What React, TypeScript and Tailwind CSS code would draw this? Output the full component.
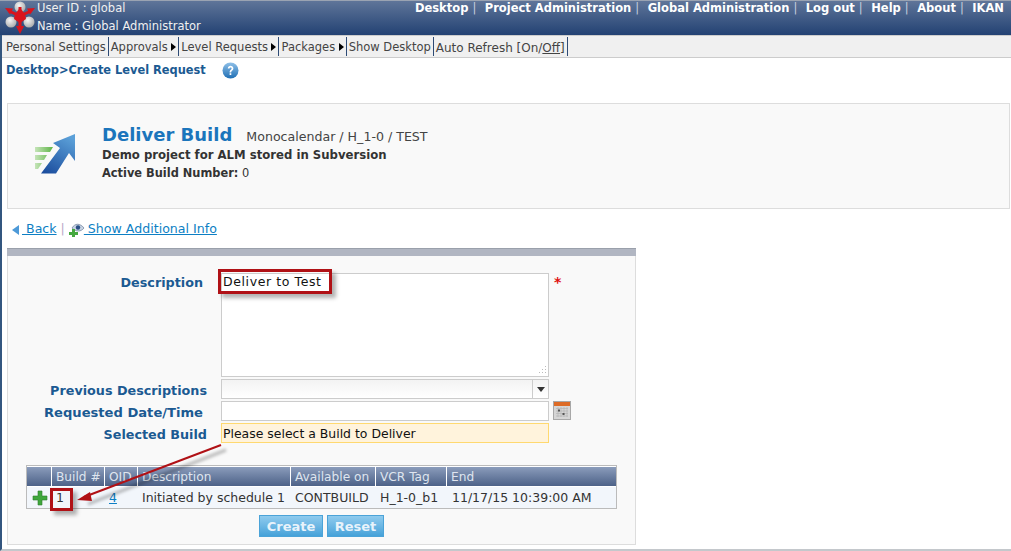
const font = { fontFamily: '"DejaVu Sans", Verdana, sans-serif' };

const topLinks = ['Desktop', 'Project Administration', 'Global Administration', 'Log out', 'Help', 'About'];

const columns = [
  { label: '', width: 'w-[25px]' },
  { label: 'Build #', width: 'w-[53px]' },
  { label: 'OID', width: 'w-[33px]' },
  { label: 'Description', width: 'w-[153px]' },
  { label: 'Available on', width: 'w-[85px]' },
  { label: 'VCR Tag', width: 'w-[71px]' },
  { label: 'End', width: 'flex-1' },
];

const LogoIcon = () => (
  <svg width="32" height="33" viewBox="0 0 32 33" className="shrink-0">
    <defs>
      <radialGradient id="ball" cx="0.4" cy="0.35" r="0.7">
        <stop offset="0" stopColor="#f4f4f4" />
        <stop offset="1" stopColor="#a8a8a8" />
      </radialGradient>
    </defs>
    <circle cx="15" cy="6" r="5.5" fill="url(#ball)" />
    <circle cx="6" cy="21" r="5.5" fill="url(#ball)" />
    <circle cx="24" cy="21" r="5.5" fill="url(#ball)" />
    <path d="M15 15L4 10M15 15L26 10M15 15V29M15 15V6" stroke="#d9141c" strokeWidth="3" />
    <path d="M0 7l8 .5-3 6zM30 7l-8 .5 3 6zM15 33l-4-8h8z" fill="#d9141c" />
    <path d="M15 7l5 6 1 5-6 4-6-4 1-5z" fill="#d9141c" />
  </svg>
);

const HelpIcon = () => (
  <svg width="17" height="17" viewBox="0 0 17 17" className="shrink-0">
    <defs>
      <linearGradient id="helpBlue" x1="0" y1="0" x2="0" y2="1">
        <stop offset="0" stopColor="#8fc0e8" />
        <stop offset="1" stopColor="#1f6fb5" />
      </linearGradient>
    </defs>
    <circle cx="8.5" cy="8.5" r="8" fill="url(#helpBlue)" />
    <path d="M5.8 6.4c0-3.4 5.6-3.4 5.6 0 0 2.2-2.2 2-2.2 4H7.6c0-2.8 2-2.6 2-4 0-1.2-2-1.2-2 .2z" fill="#fff" />
    <rect x="7.6" y="11.2" width="1.7" height="1.8" fill="#fff" />
  </svg>
);

const DeliverIcon = () => (
  <svg width="41" height="41" viewBox="0 0 41 41">
    <defs>
      <linearGradient id="arrowBlue" x1="0.7" y1="0" x2="0.2" y2="1">
        <stop offset="0" stopColor="#5ba0d8" />
        <stop offset="1" stopColor="#1d4f9f" />
      </linearGradient>
      <linearGradient id="barGreen" x1="1" y1="0" x2="0" y2="0">
        <stop offset="0" stopColor="#5fb548" />
        <stop offset="1" stopColor="#c5e4b8" />
      </linearGradient>
    </defs>
    <path d="M0 14h18l-3 5H0zM0 22h12l-3 5H0zM0 30h7l-4 6H0z" fill="url(#barGreen)" />
    <path d="M6 40.5L25 15l-7-5L40 1v27l-6-8-13 20.5z" fill="url(#arrowBlue)" />
  </svg>
);

const PlusIcon = ({ size }: { size: number }) => (
  <svg width={size} height={size} viewBox="0 0 16 16" className="shrink-0">
    <path d="M6 1h4v5h5v4h-5v5H6v-5H1V6h5z" fill="#3fa73c" stroke="#2c7d2b" strokeWidth="0.6" />
  </svg>
);

const InfoIcon = () => (
  <svg width="16" height="15" viewBox="0 0 16 15" className="shrink-0">
    <path d="M3 6c3-5 8-5 12 0-3 4-8 4-12 0z" fill="#c7d3e3" stroke="#6a7c98" strokeWidth="0.7" />
    <circle cx="9" cy="5.5" r="2.2" fill="#2a4f85" />
    <path d="M3 7h3v3h3v3H6v2H3v-2H0v-3h3z" fill="#45a83f" />
  </svg>
);

const CalendarIcon = () => (
  <svg width="18" height="19" viewBox="0 0 18 19" className="shrink-0">
    <rect x="0.5" y="0.5" width="17" height="18" fill="#d6d6d6" stroke="#a8a8a8" />
    <rect x="1" y="1" width="16" height="4" fill="#dd6b26" />
    <path d="M3 7.5h12M3 10h12M3 12.5h12M3 15h12M5 6v10M8 6v10M11 6v10M14 6v10" stroke="#b4b4b4" strokeWidth="0.7" />
    <rect x="5" y="8.5" width="2" height="2" fill="#555" />
    <rect x="9.5" y="12" width="2" height="2" fill="#555" />
  </svg>
);

const ResizeGrip = () => (
  <svg width="9" height="9" viewBox="0 0 9 9">
    <path d="M7 0h1v1H7zM7 3h1v1H7zM7 6h1v1H7zM4 3h1v1H4zM4 6h1v1H4zM1 6h1v1H1z" fill="#bbb" />
  </svg>
);

const MenuItem = ({ label, arrow }: { label: string; arrow?: boolean }) => (
  <div className="flex h-[19px] items-center border-r border-[#2d4a75] px-[2px]">
    <span className="pt-[2px]">{label}</span>
    {arrow && <span className="ml-[3.5px] mt-[1px] h-0 w-0 border-y-[4px] border-l-[5px] border-y-transparent border-l-black" />}
  </div>
);

export default function App() {
  return (
    <div className="relative flex h-[551px] w-[1011px] flex-col overflow-hidden bg-white text-[11.5px] text-[#333]" style={font}>
      {/* Header */}
      <div className="flex h-[35px] shrink-0 justify-between border-t border-[#9aa3b2] bg-gradient-to-b from-[#5f7599] to-[#234273] pr-[7px] text-white">
        <div className="flex pl-[5px]">
          <LogoIcon />
          <div className="-mt-[2px] leading-[18px] text-[#f0f0f0]">
            <div>User ID : global</div>
            <div>Name : Global Administrator</div>
          </div>
        </div>
        <div className="flex h-[16px] items-center font-bold">
          {topLinks.map((link) => (
            <span key={link} className="flex items-center">
              {link}
              <span className="ml-[4px] mr-[8.5px] font-normal text-[#c5cede]">|</span>
            </span>
          ))}
          <span>IKAN</span>
        </div>
      </div>

      <div className="flex flex-1 flex-col border-b-[2px] border-l-[2px] border-[#c4c8cc] border-l-[#33567f]">
        {/* Menu bar */}
        <div className="flex h-[23px] shrink-0 items-center border-y border-y-[#ccc] bg-[#f0f0f0] pl-[2px] text-[#444]">
          <MenuItem label="Personal Settings" />
          <MenuItem label="Approvals" arrow />
          <MenuItem label="Level Requests" arrow />
          <MenuItem label="Packages" arrow />
          <MenuItem label="Show Desktop" />
          <div className="flex h-[19px] items-center border-r border-[#2d4a75] px-[2px]">
            <span className="pt-[2px] text-[12px]">Auto Refresh [On/<span className="underline">Off</span>]</span>
          </div>
        </div>

        {/* Breadcrumb */}
        <div className="flex h-[24px] shrink-0 items-center pl-[4px] pt-[1px] text-[11.4px] font-bold text-[#1b5a92]">
          <span className="pt-[1px]">Desktop&gt;Create Level Request</span>
          <span className="ml-[16px]"><HelpIcon /></span>
        </div>

        {/* Level request summary */}
        <div className="ml-[5px] mr-[1px] mt-[21px] flex h-[106px] shrink-0 items-center border border-[#ddd] bg-[#f9f9f9]">
          <div className="ml-[27px] -mt-[5px] w-[67px]"><DeliverIcon /></div>
          <div className="-mt-[9px]">
            <div className="flex items-baseline pt-[4px] leading-[20px]">
              <span className="text-[18px] font-bold text-[#1b75bc]">Deliver Build</span>
              <span className="ml-[14px] text-[12.6px] text-[#444]">Monocalendar / H_1-0 / TEST</span>
            </div>
            <div className="text-[11.7px] font-bold leading-[16px]">Demo project for ALM stored in Subversion</div>
            <div className="mt-[1px] text-[11.4px] leading-[18px]"><b>Active Build Number:</b> 0</div>
          </div>
        </div>

        {/* Links */}
        <div className="flex h-[39px] shrink-0 items-center pl-[10px] pt-[2px] text-[12.6px] text-[#0d7fc4]">
          <span className="h-0 w-0 border-y-[5px] border-r-[7px] border-y-transparent border-r-[#4d9ad8]" />
          <span className="ml-[3px] underline">&nbsp;Back</span>
          <span className="ml-[4px] mr-[4px] text-[#b9a9c9]">|</span>
          <InfoIcon />
          <span className="-ml-[1px] underline">&nbsp;Show Additional Info</span>
        </div>

        {/* Form panel */}
        <div className="ml-[5px] flex h-[297px] w-[629px] shrink-0 flex-col border-x border-b border-[#ddd] bg-[#f9f9f9]">
          <div className="-mx-[1px] h-[8px] shrink-0 border-t border-[#9aa0ab] bg-[#b1b6c2]" />

          <div className="mt-[17px] grid grid-cols-[200px_328px_1fr] gap-x-[13px] gap-y-[2px] text-[12.75px] font-bold leading-[16px] text-[#1b5a92]">
            <div className="pr-[5px] pt-[2px] text-right">Description</div>
            <div className="flex h-[104px] items-end justify-end border border-[#ccc] bg-white p-[1px]">
              <ResizeGrip />
            </div>
            <div className="-ml-[8px] pt-[1px] text-[14px] text-[#e01010]">*</div>

            <div className="pr-[1px] pt-[4px] text-right">Previous Descriptions</div>
            <div className="flex h-[20px] border border-[#ccc] bg-gradient-to-b from-[#f3f3f3] to-white">
              <div className="flex-1" />
              <div className="flex w-[16px] items-center justify-center border-l border-[#ccc]">
                <span className="h-0 w-0 border-x-[4px] border-t-[5px] border-x-transparent border-t-[#333]" />
              </div>
            </div>
            <div />

            <div className="pr-[5px] pt-[4px] text-right text-[13.1px]">Requested Date/Time</div>
            <div className="h-[20px] border border-[#ccc] bg-white" />
            <div className="-ml-[9px]"><CalendarIcon /></div>

            <div className="pr-[1px] pt-[4px] text-right">Selected Build</div>
            <div className="flex h-[20px] items-center border border-[#ffd970] bg-[#fff3dc] pl-[1px] pt-[1px] text-[12.45px] font-normal text-[#111]">
              Please select a Build to Deliver
            </div>
            <div />
          </div>

          {/* Builds table */}
          <div className="ml-[18px] mt-[22px] flex h-[44px] w-[591px] shrink-0 flex-col border border-[#bbb] bg-[#f2f6fb] text-[12.5px]">
            <div className="flex h-[21px] shrink-0 border-y border-t-white border-b-white bg-gradient-to-b from-[#8b9cbb] to-[#4d6288] text-[12.2px] text-[#dfe5ef]">
              {columns.map((col, i) => (
                <div key={i} className={`${col.width} flex items-center border-r border-white pl-[4px] pt-[1px] last:border-r-0`}>
                  {col.label}
                </div>
              ))}
            </div>
            <div className="flex flex-1 items-center pt-[1px] text-[#333]">
              <div className="flex w-[25px] justify-center pl-[1px]"><PlusIcon size={16} /></div>
              <div className="w-[53px] pl-[4px]">1</div>
              <div className="w-[33px] pl-[4px] text-[#0d7fc4] underline">4</div>
              <div className="w-[153px] pl-[4px]">Initiated by schedule 1</div>
              <div className="w-[85px] pl-[4px]">CONTBUILD</div>
              <div className="w-[71px] pl-[4px]">H_1-0_b1</div>
              <div className="flex-1 pl-[5px]">11/17/15 10:39:00 AM</div>
            </div>
          </div>

          {/* Actions */}
          <div className="mt-[6px] flex justify-center gap-[4px] text-[13px] font-bold text-[#e8f3fb]">
            <button className="h-[22px] w-[64px] border border-[#4ba3d8] bg-gradient-to-b from-[#8fcbee] to-[#45a2d9] pt-[1px]">Create</button>
            <button className="h-[22px] w-[57px] border border-[#4ba3d8] bg-gradient-to-b from-[#8fcbee] to-[#45a2d9] pt-[1px]">Reset</button>
          </div>
        </div>
      </div>

      {/* Annotations drawn over the form */}
      <div className="absolute left-[218px] top-[269px] flex h-[25px] w-[114px] items-center border-[3px] border-[#b01116] pl-[2px] pt-[2px] text-[12.5px] tracking-[0.6px] text-[#111] shadow-[4px_4px_4px_rgba(0,0,0,0.3)]">
        Deliver to Test
      </div>
      <div className="absolute left-[50px] top-[488px] h-[23px] w-[23px] border-[3px] border-[#b01116] shadow-[4px_4px_4px_rgba(0,0,0,0.3)]" />
      <svg className="absolute left-0 top-0" width="1011" height="551">
        <path d="M226 450L88 504" stroke="#000" strokeOpacity="0.25" strokeWidth="3" className="blur-[1.5px]" />
        <path d="M221 445L84 497" stroke="#b01116" strokeWidth="2" />
        <path d="M77 500L90 492L92 501z" fill="#b01116" />
      </svg>
    </div>
  );
}
